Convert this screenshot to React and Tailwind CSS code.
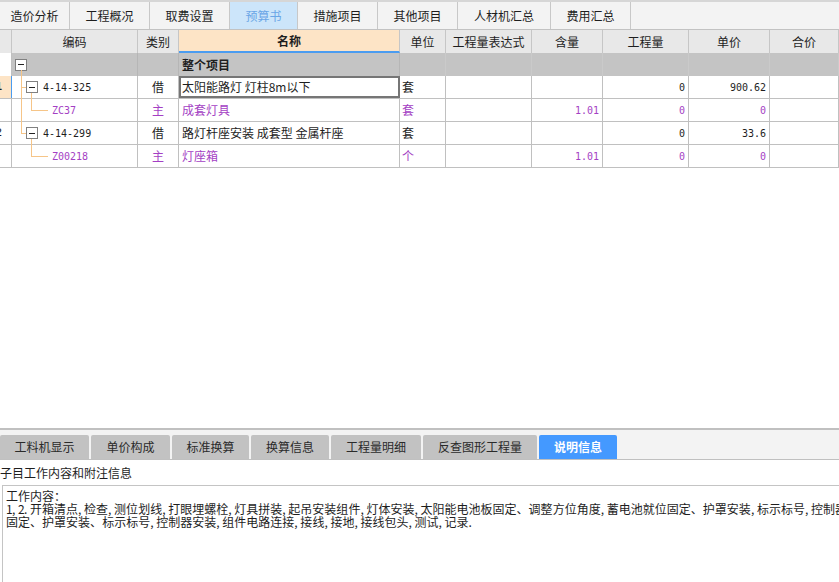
import React from 'react';

const cjk = { fontFamily: '"Noto Sans CJK SC", "Noto Sans", sans-serif' };
const mono = { fontFamily: '"DejaVu Sans Mono", "Liberation Mono", monospace' };

const topTabs = [
  { label: '造价分析', w: 'w-[70px]' },
  { label: '工程概况', w: 'w-[80px]' },
  { label: '取费设置', w: 'w-[80px]' },
  { label: '预算书', w: 'w-[68px]', active: true },
  { label: '措施项目', w: 'w-[80px]' },
  { label: '其他项目', w: 'w-[80px]' },
  { label: '人材机汇总', w: 'w-[93px]' },
  { label: '费用汇总', w: 'w-[80px]' },
];

const bottomTabs = [
  { label: '工料机显示', w: 'w-[89px]' },
  { label: '单价构成', w: 'w-[79px]' },
  { label: '标准换算', w: 'w-[77px]' },
  { label: '换算信息', w: 'w-[78px]' },
  { label: '工程量明细', w: 'w-[90px]' },
  { label: '反查图形工程量', w: 'w-[114px]' },
  { label: '说明信息', w: 'w-[78px]', active: true },
];

// column widths incl. right border
const cols = ['w-[12px]', 'w-[126px]', 'w-[41px]', 'w-[221px]', 'w-[46px]', 'w-[86px]', 'w-[71px]', 'w-[86px]', 'w-[81px]', 'w-[69px]'];
const heads = ['', '编码', '类别', '名称', '单位', '工程量表达式', '含量', '工程量', '单价', '合价'];

const rows = [
  { no: '1', mark: true, code: '4-14-325', toggle: true, type: '借', name: '太阳能路灯 灯柱8m以下', unit: '套', qty: '', amt: '0', price: '900.62', selected: true },
  { code: 'ZC37', sub: true, type: '主', name: '成套灯具', unit: '套', qty: '1.01', amt: '0', price: '0' },
  { no: '2', code: '4-14-299', toggle: true, type: '借', name: '路灯杆座安装 成套型 金属杆座', unit: '套', qty: '', amt: '0', price: '33.6' },
  { code: 'Z00218', sub: true, type: '主', name: '灯座箱', unit: '个', qty: '1.01', amt: '0', price: '0' },
];

function Toggle() {
  return (
    <span className="relative inline-block w-[12px] h-[12px] border border-[#808080] bg-white shrink-0">
      <span className="absolute left-[2px] top-[4.5px] w-[6px] h-px bg-[#222]" />
    </span>
  );
}

// half-width chars get a fixed 6px cell like a bitmap CJK font
function Sim({ t }) {
  return t.split('').map((c, i) =>
    c.charCodeAt(0) < 128 ? (
      <span key={i} className="inline-block w-[6px]">{c}</span>
    ) : (
      c
    )
  );
}

export default function App() {
  return (
    <div className="w-[839px] h-[582px] flex flex-col overflow-hidden bg-white text-[12px] text-[#1e1e1e]" style={cjk}>
      {/* top tabs */}
      <div className="h-[30px] flex bg-[#f3f3f3] border-t-2 border-t-[#d6d6d6] border-b border-b-[#c2c2c2] shrink-0">
        {topTabs.map((t) => (
          <div
            key={t.label}
            className={`${t.w} flex items-center justify-center border-r border-[#c8c8c8] ${
              t.active ? 'bg-[#cce5fa] text-[#6aa6e6]' : 'text-[#1e1e1e]'
            }`}
          >
            {t.label}
          </div>
        ))}
      </div>

      {/* grid header */}
      <div className="h-[23px] flex bg-[#e8e8e8] shrink-0">
        {heads.map((h, i) => (
          <div
            key={i}
            className={`${cols[i]} flex items-center justify-center border-r border-[#c6c6c6] ${
              i === 3 ? 'bg-[#fde4c6] font-bold border-b-2 border-b-[#4b9cf0]' : ''
            }`}
          >
            {h}
          </div>
        ))}
      </div>

      {/* grid body */}
      <div className="relative shrink-0">
        <div className="h-[23px] flex">
          <div className={`${cols[0]} border-r border-[#c0c0c0] bg-white`} />
          <div className={`${cols[1]} flex items-center pl-[3px] bg-[#c4c4c4] border-r border-[#b6b6b6]`}>
            <Toggle />
          </div>
          <div className={`${cols[2]} bg-[#c4c4c4] border-r border-[#b6b6b6]`} />
          <div className={`${cols[3]} flex items-center pl-[3px] font-bold bg-[#c4c4c4] border-r border-[#b6b6b6]`}>整个项目</div>
          {cols.slice(4).map((c, i) => (
            <div key={i} className={`${c} bg-[#c4c4c4] border-r border-[#cacaca]`} />
          ))}
        </div>

        {rows.map((r, idx) => {
          const color = r.sub ? 'text-[#a43fc4]' : 'text-[#1e1e1e]';
          return (
            <div key={idx} className={`h-[23px] flex border-b border-[#c0c0c0] ${color}`}>
              <div
                className={`${cols[0]} flex items-center justify-end pr-[9px] overflow-hidden border-r ${
                  r.mark ? 'bg-[#fde4c6] border-r-[#4b9cf0] font-bold' : 'bg-white border-[#c0c0c0]'
                }`}
                style={mono}
              >
                <span className="text-[11px] text-[#1e1e1e]">{r.no}</span>
              </div>
              <div
                className={`${cols[1]} flex items-center border-r border-[#c0c0c0] ${r.sub ? 'pl-[40px]' : 'pl-[14px] gap-[5px]'}`}
              >
                {r.toggle && <Toggle />}
                <span className="text-[10px]" style={mono}>{r.code}</span>
              </div>
              <div className={`${cols[2]} flex items-center justify-center border-r border-[#c0c0c0]`}>{r.type}</div>
              <div
                className={`${cols[3]} flex items-center pl-[3px] border-r border-[#c0c0c0] ${
                  r.selected ? 'outline-2 outline-[#767676] -outline-offset-2' : ''
                }`}
              >
                {r.name}
              </div>
              <div className={`${cols[4]} flex items-center pl-[2px] border-r border-[#c0c0c0]`}>{r.unit}</div>
              <div className={`${cols[5]} border-r border-[#c0c0c0]`} />
              <div className={`${cols[6]} flex items-center justify-end pr-[3px] text-[10px] border-r border-[#c0c0c0]`} style={mono}>{r.qty}</div>
              <div className={`${cols[7]} flex items-center justify-end pr-[3px] text-[10px] border-r border-[#c0c0c0]`} style={mono}>{r.amt}</div>
              <div className={`${cols[8]} flex items-center justify-end pr-[3px] text-[10px] border-r border-[#c0c0c0]`} style={mono}>{r.price}</div>
              <div className={`${cols[9]} border-r border-[#c0c0c0]`} />
            </div>
          );
        })}

        {/* tree connectors */}
        <svg className="absolute left-0 top-0 pointer-events-none" width="60" height="115" shapeRendering="crispEdges">
          <g stroke="#f6c588" strokeWidth="1" fill="none">
            <path d="M21.5 17 V80.5 M21.5 34.5 H26 M21.5 80.5 H26" />
            <path d="M31.5 40 V57.5 H48" />
            <path d="M31.5 86 V103.5 H48" />
          </g>
        </svg>
      </div>

      <div className="h-[260px] shrink-0" />

      {/* bottom tabs */}
      <div className="h-[32px] shrink-0 flex items-end gap-[2px] bg-[#f3f3f3] border-t-2 border-t-[#c0c0c0] border-b border-b-[#c0c0c0]">
        {bottomTabs.map((t) => (
          <div
            key={t.label}
            className={`${t.w} h-[24px] flex items-center justify-center rounded-t-[2px] ${
              t.active ? 'bg-[#4499ff] text-white font-bold' : 'bg-[#c2c2c2] text-[#2a2a2a]'
            }`}
          >
            {t.label}
          </div>
        ))}
      </div>

      <div className="h-[25px] shrink-0 flex items-center">子目工作内容和附注信息</div>

      <div className="flex-1 ml-[2px] border-t border-l border-[#c4c4c4] pl-[3px] pt-[3px] leading-[13px] overflow-hidden whitespace-nowrap">
        <div><Sim t="工作内容：" /></div>
        <div>
          <Sim t="1,2.开箱清点,检查,测位划线,打眼埋螺栓,灯具拼装,起吊安装组件,灯体安装,太阳能电池板固定、调整方位角度,蓄电池就位固定、护罩安装,标示标号,控制器安装,组件电路连接" />
        </div>
        <div>
          <Sim t="固定、护罩安装、标示标号,控制器安装,组件电路连接,接线,接地,接线包头,测试,记录." />
        </div>
      </div>
    </div>
  );
}
